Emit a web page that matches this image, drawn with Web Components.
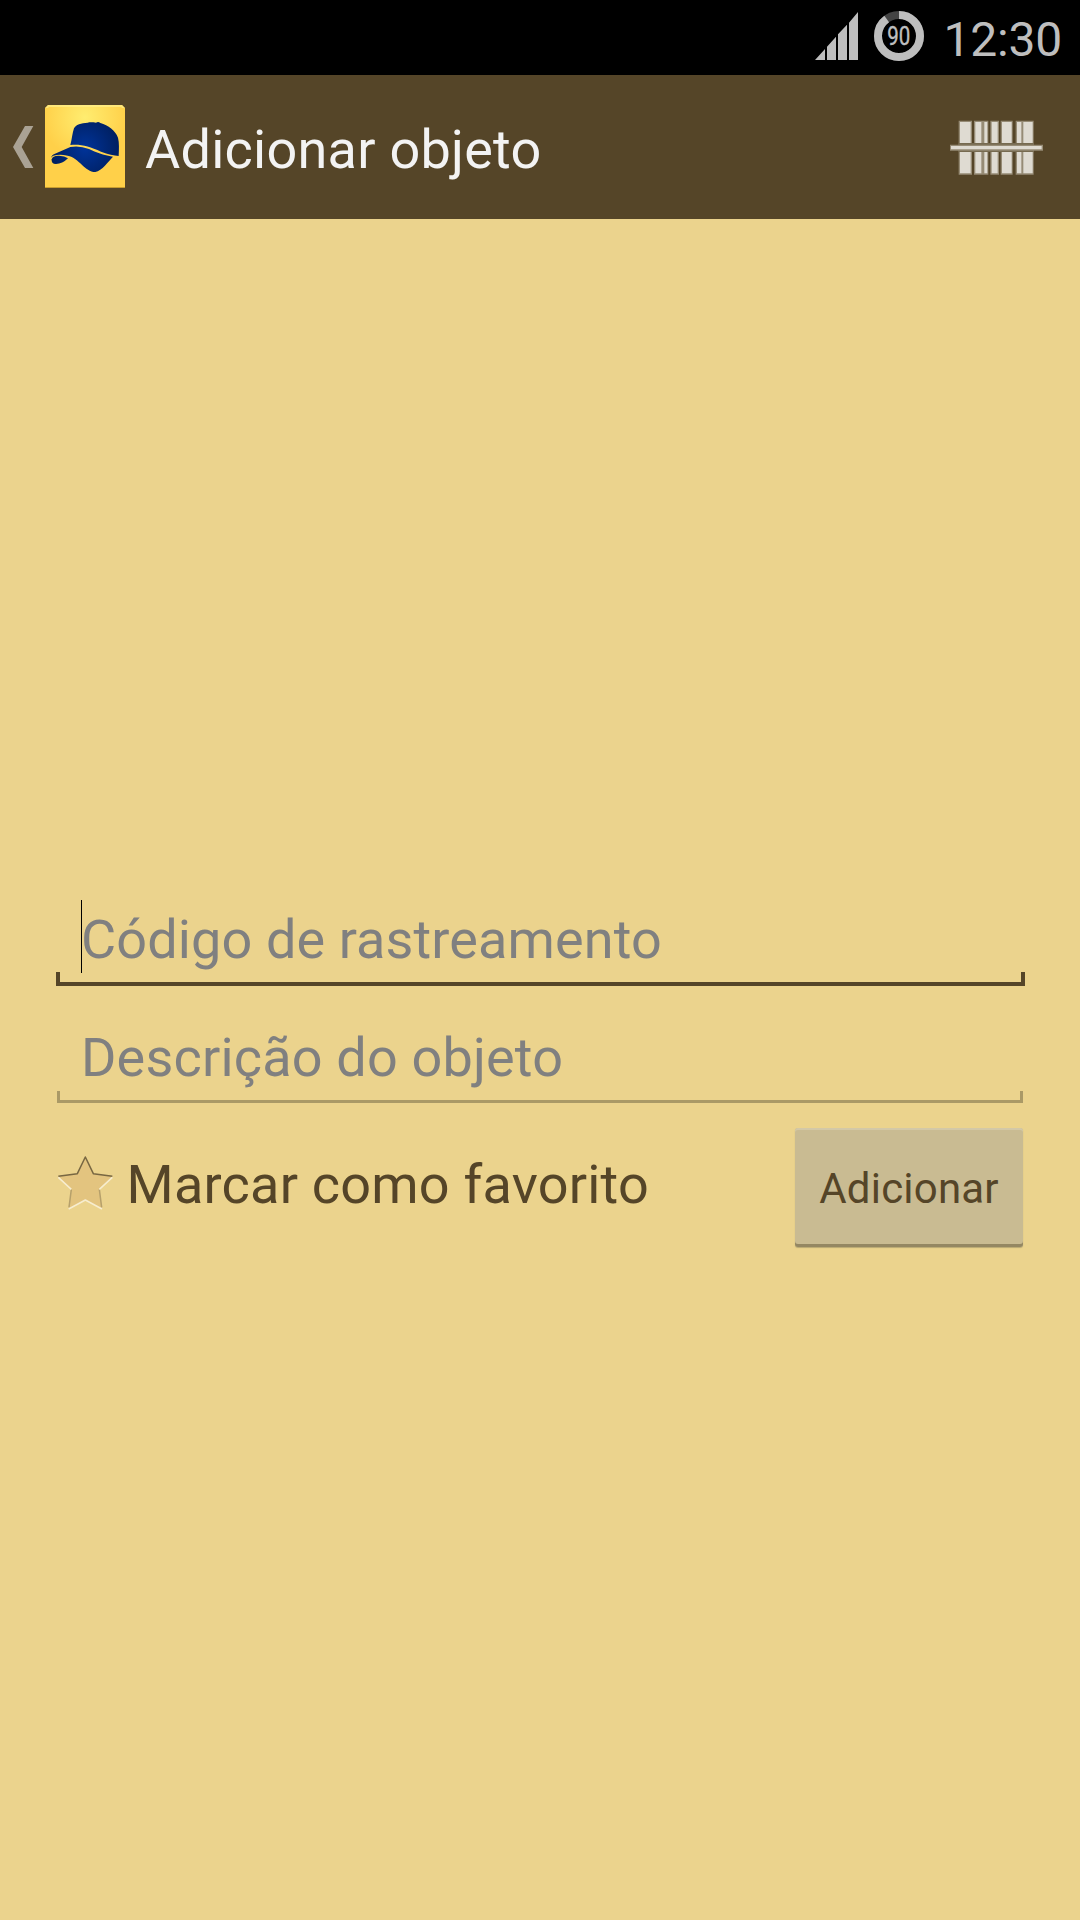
<!DOCTYPE html>
<html lang="pt-BR">
<head>
<meta charset="utf-8">
<title>Adicionar objeto</title>
<style>
html,body{margin:0;padding:0;background:#ebd38d}
body{width:1080px;height:1920px;overflow:hidden;font-family:Roboto,sans-serif}
</style>
</head>
<body>
<add-screen></add-screen>
<script>
const define = (name, html) => customElements.define(name, class extends HTMLElement {
  constructor() {
    super();
    const t = document.createElement('template');
    t.innerHTML = html;
    this.attachShadow({mode: 'open'}).append(t.content.cloneNode(true));
  }
});

define('status-bar', `
<style>
:host{display:flex;box-sizing:border-box;width:1080px;height:75px;background:#000;color:#bebebe;justify-content:flex-end;align-items:flex-start;padding-right:18px}
svg{display:block}
.signal{margin:12px 16px 0 0}
.battery{margin:11px 19px 0 0}
.clock{font-size:48px;line-height:56px;margin-top:12px;letter-spacing:-.2px;white-space:nowrap}
</style>
<svg class="signal" width="43" height="48" viewBox="45 36 129 144" fill="#bebebe"><path d="M45 180L75 147V180ZM81 180V140L108 110V180ZM114 180V103L141 74V180ZM147 180V68L174 36V180Z"/></svg>
<svg class="battery" width="50" height="50" viewBox="0 0 50 50"><circle cx="25" cy="25" r="21" fill="none" stroke="#444" stroke-width="8"/><circle cx="25" cy="25" r="21" fill="none" stroke="#bebebe" stroke-width="8" pathLength="100" stroke-dasharray="90 10" transform="rotate(-90 25 25)"/><text transform="translate(24.8 34) scale(.82 1)" text-anchor="middle" font-size="25" fill="#bebebe" stroke="#bebebe" stroke-width=".4" font-family="Roboto,sans-serif">90</text></svg>
<span class="clock">12:30</span>`);

define('app-icon', `
<style>:host{display:block;width:80px;height:83px}svg{display:block}</style>
<svg width="80" height="83" viewBox="135 45 240 249">
<defs><radialGradient id="y" gradientUnits="userSpaceOnUse" cx="255" cy="82" r="125"><stop stop-color="#ffed70"/><stop offset="1" stop-color="#ffd049"/></radialGradient>
<radialGradient id="b" gradientUnits="userSpaceOnUse" cx="255" cy="175" r="110"><stop stop-color="#003399"/><stop offset="1" stop-color="#001e5c"/></radialGradient></defs>
<path d="M135 54L144 45H366L375 54V294H135Z" fill="url(#y)"/>
<path d="M135 54L144 45H366L375 54H366L363 51H147L144 54Z" fill="#fff08c" opacity=".7"/>
<path d="M135 291H375V294H135Z" fill="#c89d2f"/>
<g fill="url(#b)"><path d="M211 165C216 148 217 128 222 115C227 104 244 99 263 98C270 96 280 97 288 98Q295 94 301 99C325 105 346 122 354 143C358 158 357 178 356 198Q335 196 303 185C268 169 243 162 211 165Z"/>
<path d="M153 204Q154 195 165 191L211 171Q239 166 267 177C289 187 309 196 339 200C325 214 306 242 286 246C254 246 238 204 203 197Q179 191 160 197Q154 200 153 204Z"/>
<path d="M155 208Q158 196 177 197Q194 198 204 205Q187 222 168 222Q153 222 155 208Z"/></g>
</svg>`);

define('barcode-icon', `
<style>:host{display:block;width:94px;height:56px}svg{display:block}</style>
<svg width="94" height="56" viewBox="60 58 282 168">
<path fill="#968b75" d="M86 60H126V222H86ZM132 60H175V222H132ZM181 60H207V222H181ZM212 60H248V222H212ZM257 60H311V222H257Z"/>
<path fill="#dfdbd2" d="M90 64H122V218H90ZM136 64H154V218H136ZM163 64H172V218H163ZM185 64H203V218H185ZM216 64H245V218H216ZM261 64H274V218H261ZM280 64H308V218H280Z"/>
<path fill="#766a50" d="M86 127H311V154H86Z"/><path fill="#968b75" d="M60 132H339V150H60Z"/><path fill="#dfdbd2" d="M63 136H335V146H63Z"/>
</svg>`);

define('action-bar', `
<style>
:host{display:flex;box-sizing:border-box;width:1080px;height:144px;background:#554528;color:#f3f3f3;align-items:flex-start;padding:0 36.5px 0 13px}
.back{display:block;margin:51px 11px 0 0}
app-icon{margin-top:30px}
h1{margin:43px 0 0 20px;font-weight:400;font-size:54px;line-height:63px;letter-spacing:.25px;white-space:nowrap;flex:1}
barcode-icon{margin-top:44.5px}
</style>
<svg class="back" width="21" height="42" viewBox="39 108 63 126"><path d="M75 108H100L65 171L100 234H75L39 171Z" fill="#aaa294"/></svg>
<app-icon></app-icon><h1><slot></slot></h1><barcode-icon></barcode-icon>`);

define('text-field', `
<style>
:host{display:block;position:relative;box-sizing:border-box;width:970px;height:118px;color:#808080;font-size:54px}
.hint{display:block;padding:12px 26px 0;line-height:63px;letter-spacing:.18px;white-space:nowrap}
.line{position:absolute;box-sizing:border-box;left:2px;right:2px;top:77px;height:12px;border:3px solid #aa9966;border-top:0}
.caret{display:none;position:absolute;left:26px;top:4px;width:1px;height:73px;background:#000}
:host([focused]) .line{left:1px;right:0;top:76px;height:14px;border:4px solid #554528;border-top:0;filter:drop-shadow(0 0 .5px #554528)}
:host([focused]) .hint{letter-spacing:.12px}
:host([focused]) .caret{display:block}
</style>
<span class="hint"><slot></slot></span><i class="caret"></i><i class="line"></i>`);

define('star-check', `
<style>
:host{display:flex;align-items:flex-start;color:#554528;font-size:54px}
svg{display:block;margin-top:25px}
span{margin:22px 0 0 12.6px;line-height:63px;letter-spacing:.22px;white-space:nowrap}
</style>
<svg width="57" height="55" viewBox="52 107 171 165" fill="none" stroke-width="4.5" stroke-linejoin="round">
<path d="M137 110L161 160L218 168L179 207L187 266L137 239L87 266L95 207L56 168L113 160Z" fill="#e3c47f"/>
<path d="M56 168L113 160L137 110L161 160L218 168" stroke="#786742"/>
<path d="M95 207L88 261M179 207L186 261" stroke="#b6a06b"/>
<path d="M56 171L95 207M218 171L179 207M87 266L137 239L187 266" stroke="#f7edcf"/></svg>
<span><slot></slot></span>`);

define('push-button', `
<style>
:host{display:block;width:228px;height:120px}
button{display:flex;justify-content:center;align-items:flex-start;box-sizing:border-box;width:228px;height:119px;padding:36px 0 0;border:0;border-radius:3px;background:#c9bb92;box-shadow:inset 0 2px #d3c8a7,inset 0 -3px #948762,0 1px 1px #b8a873;color:#554528;font:42px/49px Roboto,sans-serif;letter-spacing:.2px;text-align:center}
</style><button><slot></slot></button>`);

define('add-screen', `
<style>
:host{display:flex;flex-direction:column;width:1080px;height:1920px;background:#ebd38d}
main{display:flex;flex-direction:column;padding:677px 55px 0}
.row{display:flex;justify-content:space-between;align-items:flex-start;padding:0 2px}
star-check{margin-top:-1px}
push-button{margin-top:-4px}
</style>
<status-bar></status-bar>
<action-bar>Adicionar objeto</action-bar>
<main>
<text-field focused>Código de rastreamento</text-field>
<text-field>Descrição do objeto</text-field>
<div class="row"><star-check>Marcar como favorito</star-check><push-button>Adicionar</push-button></div>
</main>`);
</script>
</body>
</html>
